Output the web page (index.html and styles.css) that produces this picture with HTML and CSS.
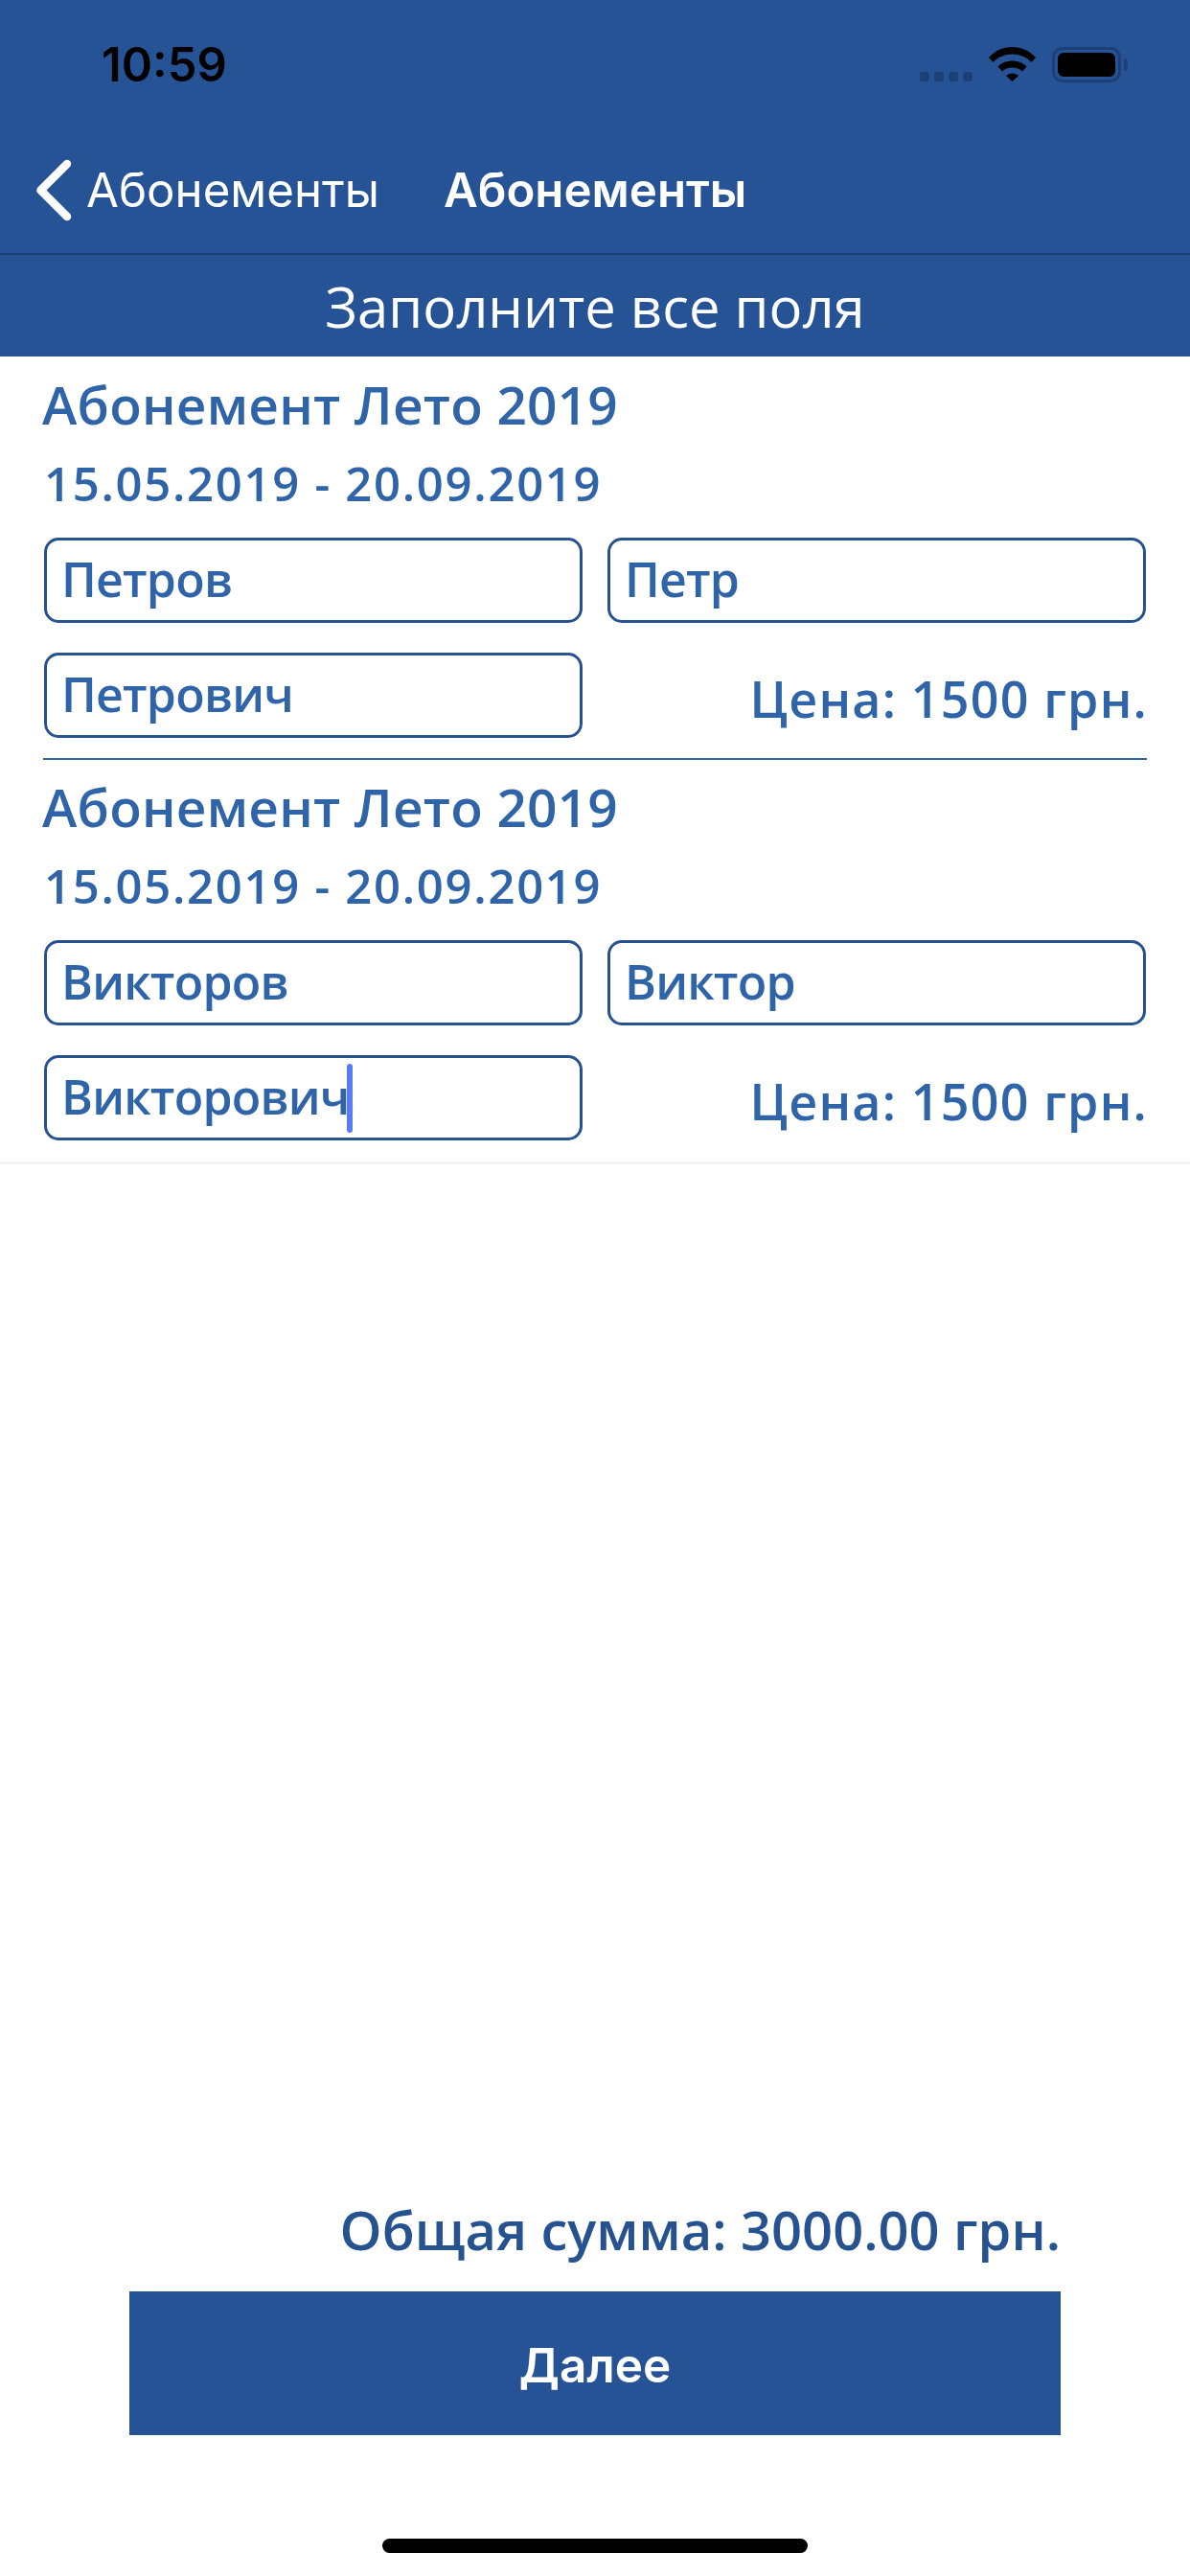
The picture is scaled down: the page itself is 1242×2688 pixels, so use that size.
FILE: index.html
```html
<!DOCTYPE html>
<html lang="ru">
<head>
  <meta charset="UTF-8" />
  <title>Абонементы</title>
  <link rel="stylesheet" href="styles.css">
</head>
<body>
  <header class="top">
    <div class="status-bar">
      <span class="time">10:59</span>
      <div class="status-icons">
        <div class="signal"><i></i><i></i><i></i><i></i></div>
        <svg class="wifi" width="49" height="36" viewBox="0 0 49 36">
          <path d="M0 11C13-3.6 36-3.6 49 11L44.5 16C34 4.5 15 4.5 4.5 16Z" />
          <path d="M9.5 20.5C17 12.5 32 12.5 39.5 20.5L35 25.5C29.5 20 19.5 20 14 25.5Z" />
          <path d="M18 30C22 26.5 27 26.5 31 30L24.5 36Z" />
        </svg>
        <div class="battery"><div class="battery-level"></div></div>
        <div class="battery-nub"></div>
      </div>
    </div>
    <nav class="nav">
      <svg class="back-icon" width="46" height="70" viewBox="0 0 46 70">
        <path d="M36 8 L8.5 35.5 L36 63" />
      </svg>
      <span class="back-label">Абонементы</span>
      <span class="nav-title">Абонементы</span>
    </nav>
    <div class="banner">Заполните все поля</div>
  </header>

  <main class="list">
    <section class="item">
      <h2 class="item-title">Абонемент Лето 2019</h2>
      <div class="item-dates">15.05.2019 - 20.09.2019</div>
      <div class="fields">
        <div class="field">Петров</div>
        <div class="field">Петр</div>
        <div class="field">Петрович</div>
        <div class="price">Цена: 1500 грн.</div>
      </div>
    </section>
    <div class="divider"></div>
    <section class="item">
      <h2 class="item-title">Абонемент Лето 2019</h2>
      <div class="item-dates">15.05.2019 - 20.09.2019</div>
      <div class="fields">
        <div class="field">Викторов</div>
        <div class="field">Виктор</div>
        <div class="field">Викторович<span class="caret"></span></div>
        <div class="price">Цена: 1500 грн.</div>
      </div>
    </section>
    <div class="list-end"></div>
  </main>

  <footer class="bottom">
    <div class="total">Общая сумма: 3000.00 грн.</div>
    <button class="next">Далее</button>
    <div class="home-indicator"></div>
  </footer>
</body>
</html>
```

FILE: styles.css
```css
* {
  box-sizing: border-box;
}

html,
body {
  margin: 0;
  height: 2688px;
}

body {
  width: 1242px;
  display: flex;
  flex-direction: column;
  background-color: #fff;
  font-family: "Open Sans", "Liberation Sans", sans-serif;
  color: #2f64a8;
  overflow: hidden;
}

/* top blue area */
.top {
  background-color: #265296;
  color: #fff;
}

.status-bar {
  height: 132px;
  display: flex;
  justify-content: space-between;
  padding: 39px 65px 0 106px;
}

.time {
  font-family: Inter, "Liberation Sans", sans-serif;
  font-weight: 600;
  font-size: 49px;
  line-height: 58px;
  color: #000;
}

.status-icons {
  display: flex;
  align-items: flex-start;
  padding-top: 10px;
}

.signal {
  display: flex;
  gap: 5px;
  margin: 26px 17px 0 0;
}

.signal i {
  width: 10px;
  height: 10px;
  border-radius: 3px;
  background-color: #1c3f78;
}

.wifi {
  fill: #000;
  margin-right: 17px;
}

.battery {
  width: 72px;
  height: 37px;
  padding: 3px;
  border: 3px solid #1c3f78;
  border-radius: 11px;
}

.battery-level {
  height: 100%;
  background-color: #000;
  border-radius: 6px;
}

.battery-nub {
  width: 4px;
  height: 13px;
  margin: 12px 0 0 3px;
  background-color: #1c3f78;
  border-radius: 0 4px 4px 0;
}

.nav {
  height: 134px;
  display: flex;
  align-items: center;
  border-bottom: 2px solid #1d3f75;
  padding-left: 34px;
  font-family: Inter, "Liberation Sans", sans-serif;
  font-size: 49.2px;
}

.back-icon {
  fill: none;
  stroke: #fff;
  stroke-width: 8.5;
  stroke-linecap: round;
  stroke-linejoin: round;
}

.back-label {
  margin: 0 67px 0 10px;
}

.nav-title {
  font-weight: 600;
}

.banner {
  height: 106px;
  display: flex;
  align-items: center;
  justify-content: center;
  font-size: 58px;
}

/* subscriptions */
.list {
  flex: 1;
}

.item {
  height: 419px;
  padding: 12px 46px 0;
}

.divider {
  height: 2px;
  margin: 0 45px -1px;
  background-color: #2f64a8;
}

.list-end {
  height: 3px;
  margin-top: 1px;
  background-color: #f2f2f2;
}

.item-title {
  margin: 0 0 0 -2px;
  font-size: 55px;
  line-height: 75px;
  font-weight: 600;
  letter-spacing: 0.2px;
}

.item-dates {
  margin: 12px 0 24px;
  font-size: 49px;
  line-height: 66px;
  font-weight: 600;
  letter-spacing: 1.7px;
}

.fields {
  display: grid;
  grid-template-columns: 562px 562px;
  column-gap: 26px;
  row-gap: 31px;
}

.field {
  height: 89px;
  display: flex;
  align-items: center;
  padding: 0 0 3px 15px;
  border: 3px solid #26528f;
  border-radius: 15px;
  font-size: 50px;
  font-weight: 600;
  letter-spacing: -0.8px;
}

.caret {
  width: 6px;
  height: 72px;
  margin: 3px 0 0 -3px;
  border-radius: 3px;
  background-color: #5b7bf0;
}

.price {
  align-self: end;
  margin-right: -2px;
  padding-bottom: 6px;
  text-align: right;
  font-size: 52px;
  font-weight: 600;
  letter-spacing: 1.2px;
  white-space: nowrap;
}

/* total and next button */
.bottom {
  display: flex;
  flex-direction: column;
  align-items: flex-end;
  padding: 0 135px 24px;
}

.total {
  font-size: 56px;
  line-height: 80px;
  font-weight: 600;
  color: #26528f;
  margin: 0 0 25px;
  white-space: nowrap;
}

.next {
  width: 972px;
  height: 150px;
  padding: 4px 0 0;
  border: none;
  background-color: #265296;
  color: #fff;
  font-family: Inter, "Liberation Sans", sans-serif;
  font-weight: 600;
  font-size: 49.5px;
}

.home-indicator {
  align-self: center;
  width: 444px;
  height: 15px;
  margin-top: 108px;
  border-radius: 8px;
  background-color: #000;
}
```
